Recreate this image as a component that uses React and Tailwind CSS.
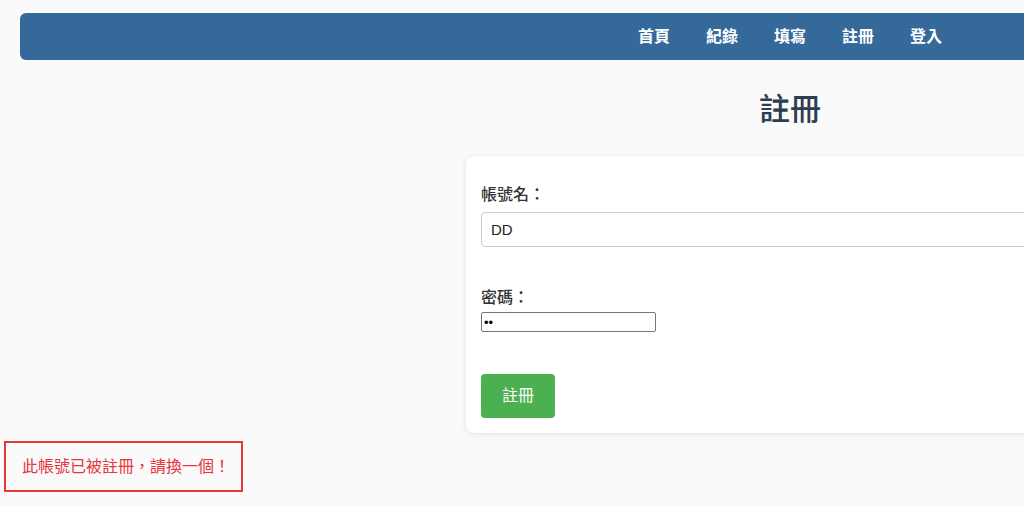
import React from 'react';

const navItems = ['首頁', '紀錄', '填寫', '註冊', '登入'];

const font = { fontFamily: '"Liberation Sans", "Noto Sans CJK TC", sans-serif' };

export default function App() {
  return (
    <div className="w-[1024px] h-[506px] overflow-hidden bg-[#fafafa]" style={font}>
      <div className="w-[1580px] pt-[13px]">
        {/* Navbar */}
        <nav className="mx-[20px] h-[47px] rounded-[6px] bg-[#35699a] flex items-center justify-center gap-[36px]">
          {navItems.map((item) => (
            <a key={item} className="text-white font-bold text-[16px] leading-[20px]">
              {item}
            </a>
          ))}
        </nav>

        {/* Heading */}
        <h1 className="mt-[30px] text-center text-[31px] leading-[40px] font-medium text-[#2c3e50]">註冊</h1>

        {/* Card */}
        <div className="mx-auto mt-[26px] w-[648px] bg-white rounded-[8px] shadow-[0_1px_6px_rgba(0,0,0,0.1)] px-[15px] pt-[29px] pb-[15px]">
          <label className="block text-[16px] leading-[20px] font-medium text-[#333]">帳號名：</label>
          <input
            type="text"
            defaultValue="DD"
            className="mt-[7px] block w-full h-[35px] border border-[#ccc] rounded-[4px] px-[9px] text-[15px] text-[#222] bg-white outline-none"
          />
          <label className="block mt-[41px] text-[16px] leading-[20px] font-medium text-[#333]">密碼：</label>
          <input
            type="password"
            defaultValue="ab"
            className="mt-[4px] block w-[175px] h-[20px] border border-[#767676] rounded-[2px] px-[2px] text-[13px] bg-white outline-none"
          />
          <button className="mt-[42px] block w-[74px] h-[44px] rounded-[4px] bg-[#4caf50] text-white text-[16px]">
            註冊
          </button>
        </div>

        {/* Error message */}
        <div className="mt-[8px] ml-[4px] w-[239px] h-[51px] border-2 border-[#e53935] flex items-center pl-[16px] text-[16px] text-[#e8343a]">
          此帳號已被註冊，請換一個！
        </div>
      </div>
    </div>
  );
}
